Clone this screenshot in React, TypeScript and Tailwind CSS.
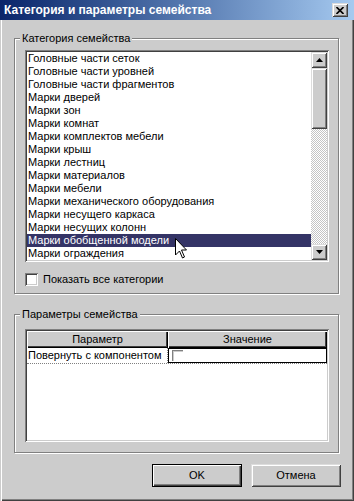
import React from 'react';

const items = [
  'Головные части сеток',
  'Головные части уровней',
  'Головные части фрагментов',
  'Марки дверей',
  'Марки зон',
  'Марки комнат',
  'Марки комплектов мебели',
  'Марки крыш',
  'Марки лестниц',
  'Марки материалов',
  'Марки мебели',
  'Марки механического оборудования',
  'Марки несущего каркаса',
  'Марки несущих колонн',
  'Марки обобщенной модели',
  'Марки ограждения',
];

// classic 3D edges
const raised =
  'shadow-[inset_1px_1px_0_#dcdcdc,inset_-1px_-1px_0_#404040,inset_2px_2px_0_#ffffff,inset_-2px_-2px_0_#808080]';
const sunken =
  'shadow-[inset_1px_1px_0_#808080,inset_-1px_-1px_0_#ffffff,inset_2px_2px_0_#404040,inset_-2px_-2px_0_#cccccc]';

const Group: React.FC<{ label: string; className?: string; children: React.ReactNode }> = ({
  label,
  className = '',
  children,
}) => (
  <div className={`relative border border-[#808080] shadow-[1px_1px_0_#ffffff,inset_1px_1px_0_#ffffff] ${className}`}>
    <span className="absolute left-[5px] -top-[7px] bg-[#cccccc] px-[2px] leading-[13px]">{label}</span>
    {children}
  </div>
);

const Arrow: React.FC<{ down?: boolean }> = ({ down }) => (
  <svg width="7" height="4" viewBox="0 0 7 4" className="block">
    <polygon points={down ? '0,0 7,0 3.5,4' : '3.5,0 7,4 0,4'} fill="#000" />
  </svg>
);

const ScrollButton: React.FC<{ down?: boolean }> = ({ down }) => (
  <div className={`h-[16px] bg-[#cccccc] flex items-center justify-center ${raised}`}>
    <Arrow down={down} />
  </div>
);

const Button: React.FC<{ label: string; primary?: boolean }> = ({ label, primary }) => (
  <div
    className={`w-[90px] h-[23px] flex items-center justify-center bg-[#cccccc] ${
      primary
        ? 'shadow-[inset_1px_1px_0_#000000,inset_-1px_-1px_0_#000000,inset_2px_2px_0_#ffffff,inset_-2px_-2px_0_#404040,inset_-3px_-3px_0_#808080]'
        : raised
    }`}
  >
    {label}
  </div>
);

export default function App() {
  return (
    <div className="relative w-[354px] h-[501px] overflow-hidden bg-[#cccccc] text-[11px] leading-[13px] text-black font-['Liberation_Sans',sans-serif] shadow-[inset_1px_0_0_#cccccc,inset_2px_0_0_#ffffff,inset_-1px_-1px_0_#404040,inset_-2px_-2px_0_#808080]">
      {/* title bar */}
      <div className="h-[20px] flex items-center justify-between pl-[4px] pr-[6px] bg-linear-to-r from-[#0a246a] to-[#a6caf0]">
        <span className="text-white font-bold text-[12px]">Категория и параметры семейства</span>
        <div className={`w-[16px] h-[14px] bg-[#cccccc] flex items-center justify-center ${raised}`}>
          <svg width="8" height="7" viewBox="0 0 8 7" className="block">
            <path d="M0.5 0 L7.5 7 M7.5 0 L0.5 7" stroke="#000" strokeWidth="1.6" />
          </svg>
        </div>
      </div>

      <div className="pl-[14px] pt-[18px]">
        <Group label="Категория семейства" className="w-[325px] h-[256px]">
          <div className="pl-[10px] pt-[11px]">
            <div className={`w-[304px] h-[212px] p-[2px] bg-white flex ${sunken}`}>
              <div className="flex-1 overflow-hidden">
                {items.map((t, i) => (
                  <div
                    key={t}
                    className={`h-[13px] leading-[13px] pl-[1px] whitespace-nowrap ${
                      i === 14 ? 'bg-[#343466] text-white' : ''
                    }`}
                  >
                    {t}
                  </div>
                ))}
              </div>
              <div className="w-[16px] flex flex-col">
                <ScrollButton />
                <div className={`h-[61px] bg-[#cccccc] ${raised}`} />
                <div className="flex-1 bg-[repeating-conic-gradient(#ffffff_0%_25%,#c4c4c4_0%_50%)] bg-size-[2px_2px]" />
                <ScrollButton down />
              </div>
            </div>
            <div className="mt-[11px] flex items-center">
              <div className={`w-[13px] h-[13px] bg-white ${sunken}`} />
              <span className="ml-[5px]">Показать все категории</span>
            </div>
          </div>
        </Group>

        <Group label="Параметры семейства" className="mt-[20px] w-[325px] h-[139px]">
          <div className="pl-[10px] pt-[14px]">
            <div className={`w-[304px] h-[113px] p-[2px] bg-white ${sunken}`}>
              <div className="flex h-[17px]">
                <div className="w-[141px] bg-[#cccccc] flex items-center justify-center shadow-[inset_1px_1px_0_#ffffff,inset_-1px_-1px_0_#000000,inset_-2px_-2px_0_#404040]">
                  Параметр
                </div>
                <div className="flex-1 bg-[#cccccc] flex items-center justify-center shadow-[inset_1px_1px_0_#ffffff,inset_-1px_-1px_0_#000000,inset_-2px_-2px_0_#404040]">
                  Значение
                </div>
              </div>
              <div className="flex h-[16px] border-b border-dotted border-[#808080]">
                <div className="w-[141px] pl-[1px] leading-[15px] border-r border-dotted border-[#808080] whitespace-nowrap">
                  Повернуть с компонентом
                </div>
                <div className="flex-1 border border-black flex items-center pl-[3px]">
                  <div className="w-[11px] h-[11px] shadow-[inset_1px_1px_0_#808080,inset_2px_2px_0_#cccccc]" />
                </div>
              </div>
            </div>
          </div>
        </Group>

        <div className="mt-[11px] flex gap-[9px] pl-[138px]">
          <Button label="OK" primary />
          <Button label="Отмена" />
        </div>
      </div>

      {/* mouse pointer over the list */}
      <svg
        width="13"
        height="21"
        viewBox="0 0 13 21"
        className="absolute left-[175px] top-[238px] pointer-events-none"
      >
        <polygon
          points="0.5,0.5 0.5,17 4.5,13 7.5,20 9.5,19 6.5,12 11.5,12"
          fill="#ffffff"
          stroke="#000000"
          strokeWidth="1"
        />
      </svg>
    </div>
  );
}
